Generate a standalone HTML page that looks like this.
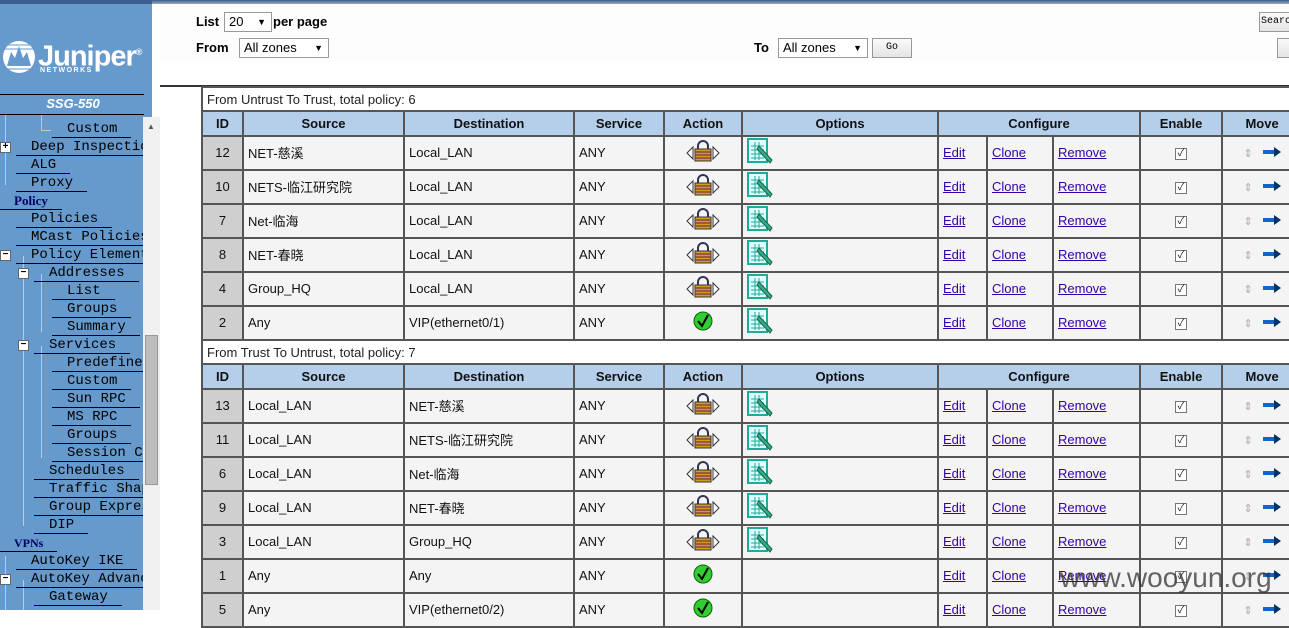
<!DOCTYPE html>
<html><head><meta charset="utf-8">
<style>
*{box-sizing:border-box}
body{margin:0;width:1289px;height:610px;overflow:hidden;background:#fff;font-family:"Liberation Sans","Noto Sans CJK SC",sans-serif;position:relative}
#side{position:absolute;left:0;top:0;width:152px;height:610px;background:#6699cc;overflow:hidden}
#topline{position:absolute;left:152px;top:0;right:0;height:4px;background:linear-gradient(#3a5f8f,#9ab)}
#sidetop{position:absolute;left:0;top:0;width:152px;height:4px;background:#3a5f8f}
.it{position:absolute;font-family:"Liberation Mono","Noto Sans CJK SC",monospace;font-size:14px;color:#000;white-space:nowrap;line-height:16px;border-bottom:1px solid #000;padding-right:14px}
.hd{font-weight:bold;color:#000066;font-family:"Liberation Serif",serif;font-size:13px}
.box{position:absolute;width:11px;height:11px;background:#fff;border:1px solid #666;font:bold 10px/9px "Liberation Mono",monospace;text-align:center;color:#000}
.tl{position:absolute;background:#c8c8c8}
#scroll{position:absolute;left:143px;top:117px;width:17px;height:493px;background:#f0f0f0}
#thumb{position:absolute;left:145px;top:335px;width:13px;height:150px;background:#bcbcbc;border:1px solid #999}
#toparea{position:absolute;left:160px;top:4px;width:1129px;height:58px;background:#fdfdfd}
.lbl{position:absolute;font-weight:bold;font-size:13px;color:#000}
.sel{position:absolute;border:1px solid #999;background:#fff;font-size:13px;padding-left:4px;line-height:18px;height:20px}
.sel:after{content:"▼";position:absolute;right:5px;top:0;font-size:9px}
.btn{position:absolute;border:1px solid #999;background:linear-gradient(#fafafa,#e4e4e4);font-family:"Liberation Mono",monospace;font-size:10px;text-align:center;line-height:18px;height:20px}
#hr{position:absolute;left:160px;top:85px;right:0;height:2px;background:#333}
table{position:absolute;left:201px;top:86px;border-collapse:collapse;table-layout:fixed;width:1100px;font-size:13px}
td{border:2px solid #555;padding:0 4px;white-space:nowrap;overflow:hidden;color:#111}
tr.t td{background:#fff;height:24px;color:#222}
tr.h td{background:#b5cfea;height:25px;font-weight:bold;text-align:center;color:#111}
tr.d td{background:#f4f4f4;height:34px;padding-bottom:2px}
tr.d td.id{background:#cfcfcf;text-align:center}
td.c{text-align:center}
a{color:#3300aa;text-decoration:underline}
.cb{display:inline-block;width:12px;height:12px;border:1px solid #777;background:#fff;font-size:10px;line-height:10px;text-align:center}
.wm{position:absolute;left:1060px;top:562px;font-size:28px;color:#333;opacity:.75}
</style></head><body>
<div id="side">
<div id="sidetop"></div>
<svg style="position:absolute;left:2px;top:40px" width="34" height="34" viewBox="0 0 34 34"><circle cx="17" cy="17" r="16" fill="#fff"/><path d="M5 26 L9 12 L13 18 L17 6 L21 18 L25 12 L29 26 Z" fill="#6699cc"/><g stroke="#6699cc" stroke-width="1"><line x1="0" y1="5" x2="34" y2="5"/><line x1="0" y1="9" x2="34" y2="9"/><line x1="0" y1="29" x2="34" y2="29"/></g></svg>
<div style="position:absolute;left:38px;top:36px;color:#fff;font:bold 29px/32px 'Liberation Sans',sans-serif;letter-spacing:-1px">Juniper<sup style="font-size:9px">®</sup></div>
<div style="position:absolute;left:40px;top:67px;color:#fff;font:bold 7px/8px 'Liberation Sans',sans-serif;letter-spacing:1.5px">NETWORKS</div>
<div style="position:absolute;left:0;top:94px;width:144px;height:1px;background:#000"></div>
<div style="position:absolute;left:0;top:96px;width:144px;text-align:center;color:#fff;font:italic bold 13px/16px 'Liberation Sans',sans-serif;padding-left:2px">SSG-550</div>
<div style="position:absolute;left:0;top:114px;width:144px;height:1px;background:#000"></div>
<div class="tl" style="left:5px;top:115px;width:1px;height:70px"></div>
<div class="tl" style="left:41px;top:115px;width:1px;height:16px"></div>
<div class="tl" style="left:41px;top:130px;width:10px;height:1px"></div>
<div class="tl" style="left:23px;top:256px;width:1px;height:270px"></div>
<div class="tl" style="left:41px;top:274px;width:1px;height:58px"></div>
<div class="tl" style="left:41px;top:346px;width:1px;height:112px"></div>
<div class="tl" style="left:5px;top:556px;width:1px;height:54px"></div>
<div class="tl" style="left:23px;top:580px;width:1px;height:30px"></div>

<div class="it" style="left:52px;top:121px;padding-left:15px">Custom</div>
<div class="box" style="left:0;top:142px">+</div>
<div class="it" style="left:16px;top:139px;padding-left:15px">Deep Inspection</div>
<div class="it" style="left:16px;top:157px;padding-left:15px">ALG</div>
<div class="it" style="left:16px;top:175px;padding-left:15px">Proxy</div>
<div class="it hd" style="left:0px;top:193px;padding-left:14px">Policy</div>
<div class="it" style="left:16px;top:211px;padding-left:15px">Policies</div>
<div class="it" style="left:16px;top:229px;padding-left:15px">MCast Policies</div>
<div class="box" style="left:0;top:250px">−</div>
<div class="it" style="left:16px;top:247px;padding-left:15px">Policy Elements</div>
<div class="box" style="left:18px;top:268px">−</div>
<div class="it" style="left:34px;top:265px;padding-left:15px">Addresses</div>
<div class="it" style="left:52px;top:283px;padding-left:15px">List</div>
<div class="it" style="left:52px;top:301px;padding-left:15px">Groups</div>
<div class="it" style="left:52px;top:319px;padding-left:15px">Summary</div>
<div class="box" style="left:18px;top:340px">−</div>
<div class="it" style="left:34px;top:337px;padding-left:15px">Services</div>
<div class="it" style="left:52px;top:355px;padding-left:15px">Predefined</div>
<div class="it" style="left:52px;top:373px;padding-left:15px">Custom</div>
<div class="it" style="left:52px;top:391px;padding-left:15px">Sun RPC</div>
<div class="it" style="left:52px;top:409px;padding-left:15px">MS RPC</div>
<div class="it" style="left:52px;top:427px;padding-left:15px">Groups</div>
<div class="it" style="left:52px;top:445px;padding-left:15px">Session Ca</div>
<div class="it" style="left:34px;top:463px;padding-left:15px">Schedules</div>
<div class="it" style="left:34px;top:481px;padding-left:15px">Traffic Shap</div>
<div class="it" style="left:34px;top:499px;padding-left:15px">Group Expres</div>
<div class="it" style="left:34px;top:517px;padding-left:15px">DIP</div>
<div class="it hd" style="left:0px;top:535px;padding-left:14px;font-size:12px">VPNs</div>
<div class="it" style="left:16px;top:553px;padding-left:15px">AutoKey IKE</div>
<div class="box" style="left:0;top:574px">−</div>
<div class="it" style="left:16px;top:571px;padding-left:15px">AutoKey Advanced</div>
<div class="it" style="left:34px;top:589px;padding-left:15px">Gateway</div>
</div>
<div id="scroll"></div>
<div style="position:absolute;left:147px;top:122px;font-size:8px;color:#555">▲</div>
<div id="thumb"></div>
<div id="topline"></div>
<div id="toparea"></div>
<div class="lbl" style="left:196px;top:14px">List</div>
<div class="sel" style="left:224px;top:12px;width:48px">20</div>
<div class="lbl" style="left:273px;top:14px">per page</div>
<div class="lbl" style="left:196px;top:40px">From</div>
<div class="sel" style="left:239px;top:38px;width:90px">All zones</div>
<div class="lbl" style="left:754px;top:40px">To</div>
<div class="sel" style="left:778px;top:38px;width:90px">All zones</div>
<div class="btn" style="left:872px;top:38px;width:40px">Go</div>
<div class="btn" style="left:1259px;top:12px;width:40px">Search</div>
<div class="btn" style="left:1277px;top:38px;width:30px">N</div>
<div id="hr"></div>

<table>
<colgroup><col style="width:41px"><col style="width:161px"><col style="width:170px"><col style="width:90px"><col style="width:78px"><col style="width:196px"><col style="width:49px"><col style="width:66px"><col style="width:87px"><col style="width:82px"><col style="width:80px"></colgroup>
<tr class="t"><td colspan="11">From Untrust To Trust, total policy: 6</td></tr>
<tr class="h"><td>ID</td><td>Source</td><td>Destination</td><td>Service</td><td>Action</td><td>Options</td><td colspan="3">Configure</td><td>Enable</td><td>Move</td></tr>
<tr class="d"><td class="id">12</td><td>NET-慈溪</td><td>Local_LAN</td><td>ANY</td><td class="c">LOCK</td><td>OPT</td><td><a>Edit</a></td><td><a>Clone</a></td><td><a>Remove</a></td><td class="c"><span class="cb">✓</span></td><td class="c">MV</td></tr>
<tr class="d"><td class="id">10</td><td>NETS-临江研究院</td><td>Local_LAN</td><td>ANY</td><td class="c">LOCK</td><td>OPT</td><td><a>Edit</a></td><td><a>Clone</a></td><td><a>Remove</a></td><td class="c"><span class="cb">✓</span></td><td class="c">MV</td></tr>
<tr class="d"><td class="id">7</td><td>Net-临海</td><td>Local_LAN</td><td>ANY</td><td class="c">LOCK</td><td>OPT</td><td><a>Edit</a></td><td><a>Clone</a></td><td><a>Remove</a></td><td class="c"><span class="cb">✓</span></td><td class="c">MV</td></tr>
<tr class="d"><td class="id">8</td><td>NET-春晓</td><td>Local_LAN</td><td>ANY</td><td class="c">LOCK</td><td>OPT</td><td><a>Edit</a></td><td><a>Clone</a></td><td><a>Remove</a></td><td class="c"><span class="cb">✓</span></td><td class="c">MV</td></tr>
<tr class="d"><td class="id">4</td><td>Group_HQ</td><td>Local_LAN</td><td>ANY</td><td class="c">LOCK</td><td>OPT</td><td><a>Edit</a></td><td><a>Clone</a></td><td><a>Remove</a></td><td class="c"><span class="cb">✓</span></td><td class="c">MV</td></tr>
<tr class="d"><td class="id">2</td><td>Any</td><td>VIP(ethernet0/1)</td><td>ANY</td><td class="c">CHK</td><td>OPT</td><td><a>Edit</a></td><td><a>Clone</a></td><td><a>Remove</a></td><td class="c"><span class="cb">✓</span></td><td class="c">MV</td></tr>
<tr class="t"><td colspan="11">From Trust To Untrust, total policy: 7</td></tr>
<tr class="h"><td>ID</td><td>Source</td><td>Destination</td><td>Service</td><td>Action</td><td>Options</td><td colspan="3">Configure</td><td>Enable</td><td>Move</td></tr>
<tr class="d"><td class="id">13</td><td>Local_LAN</td><td>NET-慈溪</td><td>ANY</td><td class="c">LOCK</td><td>OPT</td><td><a>Edit</a></td><td><a>Clone</a></td><td><a>Remove</a></td><td class="c"><span class="cb">✓</span></td><td class="c">MV</td></tr>
<tr class="d"><td class="id">11</td><td>Local_LAN</td><td>NETS-临江研究院</td><td>ANY</td><td class="c">LOCK</td><td>OPT</td><td><a>Edit</a></td><td><a>Clone</a></td><td><a>Remove</a></td><td class="c"><span class="cb">✓</span></td><td class="c">MV</td></tr>
<tr class="d"><td class="id">6</td><td>Local_LAN</td><td>Net-临海</td><td>ANY</td><td class="c">LOCK</td><td>OPT</td><td><a>Edit</a></td><td><a>Clone</a></td><td><a>Remove</a></td><td class="c"><span class="cb">✓</span></td><td class="c">MV</td></tr>
<tr class="d"><td class="id">9</td><td>Local_LAN</td><td>NET-春晓</td><td>ANY</td><td class="c">LOCK</td><td>OPT</td><td><a>Edit</a></td><td><a>Clone</a></td><td><a>Remove</a></td><td class="c"><span class="cb">✓</span></td><td class="c">MV</td></tr>
<tr class="d"><td class="id">3</td><td>Local_LAN</td><td>Group_HQ</td><td>ANY</td><td class="c">LOCK</td><td>OPT</td><td><a>Edit</a></td><td><a>Clone</a></td><td><a>Remove</a></td><td class="c"><span class="cb">✓</span></td><td class="c">MV</td></tr>
<tr class="d"><td class="id">1</td><td>Any</td><td>Any</td><td>ANY</td><td class="c">CHK</td><td></td><td><a>Edit</a></td><td><a>Clone</a></td><td><a>Remove</a></td><td class="c"><span class="cb">✓</span></td><td class="c">MV</td></tr>
<tr class="d"><td class="id">5</td><td>Any</td><td>VIP(ethernet0/2)</td><td>ANY</td><td class="c">CHK</td><td></td><td><a>Edit</a></td><td><a>Clone</a></td><td><a>Remove</a></td><td class="c"><span class="cb">✓</span></td><td class="c">MV</td></tr>
</table>
<div class="wm">www.wooyun.org</div>
<script>
var LOCK='<svg width="34" height="22" viewBox="0 0 34 22"><path d="M1 13 L7 7 L7 19 Z M33 13 L27 7 L27 19 Z" fill="#fff" stroke="#333"/><path d="M12 10 V6 a5 5 0 0 1 10 0 V10" fill="none" stroke="#335" stroke-width="2"/><rect x="9" y="9" width="16" height="12" fill="#c9a020" stroke="#333"/><g stroke="#8a3050" stroke-width="1.3"><line x1="9" y1="12" x2="25" y2="12"/><line x1="9" y1="15" x2="25" y2="15"/><line x1="9" y1="18" x2="25" y2="18"/></g></svg>';
var OPT='<svg width="26" height="26" viewBox="0 0 26 26"><rect x="1" y="1" width="19" height="23" fill="#dff" stroke="#2a9" stroke-width="2"/><g stroke="#2a9"><line x1="4" y1="8" x2="17" y2="8"/><line x1="4" y1="12" x2="17" y2="12"/><line x1="4" y1="16" x2="17" y2="16"/><line x1="4" y1="20" x2="17" y2="20"/><line x1="8" y1="4" x2="8" y2="22"/><line x1="12" y1="4" x2="12" y2="22"/></g><path d="M12 8 L25 22 L23 25 L10 11 Z" fill="#3a8" stroke="#164"/></svg>';
var CHK='<svg width="20" height="20" viewBox="0 0 20 20"><circle cx="10" cy="10" r="9" fill="#3c3" stroke="#060"/><path d="M5 10 L9 15 L15 4" fill="none" stroke="#000" stroke-width="2"/></svg>';
var MV='<span style="color:#aaa;font-size:11px;margin-right:10px">⇕</span><svg width="18" height="10" viewBox="0 0 18 10"><rect x="0" y="3" width="12" height="4" fill="#16c"/><path d="M11 0 L18 5 L11 10 Z" fill="#036"/></svg>';
document.querySelectorAll('td').forEach(function(t){var s=t.textContent;if(s==='LOCK')t.innerHTML=LOCK;else if(s==='OPT')t.innerHTML=OPT;else if(s==='CHK')t.innerHTML=CHK;else if(s==='MV')t.innerHTML=MV;});
</script>
</body></html>
